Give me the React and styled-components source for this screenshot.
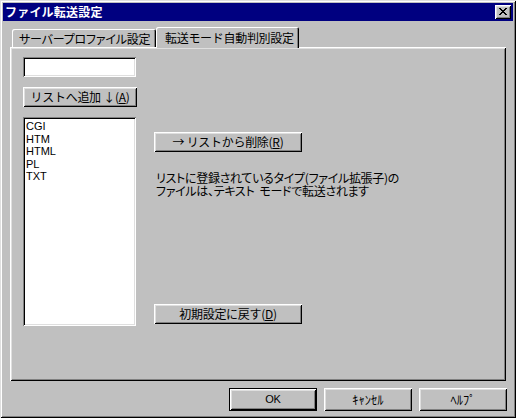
import React from "react";
import styled, { createGlobalStyle } from "styled-components";

const Global = createGlobalStyle`
  html, body { margin: 0; padding: 0; background: #c0c0c0; }
  body { font-family: "Noto Sans CJK JP", "Noto Sans", sans-serif; font-size: 12px; color: #000; }
  * { box-sizing: border-box; }
`;

const Window = styled.div`
  width: 516px;
  height: 418px;
  background: #c0c0c0;
  padding: 3px;
  display: flex;
  flex-direction: column;
  box-shadow: inset 1px 1px #dfdfdf, inset -1px -1px #000, inset 2px 2px #fff, inset -2px -2px #808080;
`;

const TitleBar = styled.div`
  height: 18px;
  background: #000080;
  color: #fff;
  display: flex;
  align-items: center;
  padding: 0 2px 0 2px;
  font-weight: bold;
  font-size: 12px;
  letter-spacing: 0.2px;
`;

const TitleText = styled.span`
  flex: 1;
  line-height: 18px;
`;

const bevel = `
  background: #c0c0c0;
  box-shadow: inset 1px 1px #fff, inset -1px -1px #000, inset 2px 2px #dfdfdf, inset -2px -2px #808080;
`;

const CloseButton = styled.div`
  width: 16px;
  height: 14px;
  ${bevel}
  display: flex;
  align-items: center;
  justify-content: center;
  padding-bottom: 1px;
`;

const Body = styled.div`
  flex: 1;
  padding: 6px 7px 0 7px;
  display: flex;
  flex-direction: column;
`;

const TabRow = styled.div`
  display: flex;
  align-items: flex-end;
  height: 21px;
  padding-left: 2px;
  margin-bottom: -1px;
  position: relative;
  z-index: 1;
`;

const Tab = styled.div`
  width: ${(p) => p.$w}px;
  height: ${(p) => (p.$active ? 21 : 18)}px;
  margin-bottom: ${(p) => (p.$active ? 0 : 1)}px;
  background: #c0c0c0;
  border-top-left-radius: 2px;
  border-top-right-radius: 2px;
  box-shadow: inset 1px 1px #fff, inset -1px 0 #000, inset -2px 0 #808080;
  display: flex;
  align-items: ${(p) => (p.$active ? "flex-start" : "center")};
  padding: ${(p) => (p.$active ? "3px 0 0 9px" : "1px 0 0 7px")};
  font-size: 12px;
  line-height: 16px;
  white-space: nowrap;
  letter-spacing: ${(p) => (p.$active ? "-0.3px" : "-0.2px")};
  font-feature-settings: ${(p) => (p.$active ? "normal" : '"palt"')};
`;

const Panel = styled.div`
  height: 334px;
  background: #c0c0c0;
  box-shadow: inset 1px 1px #fff, inset -1px -1px #000, inset 2px 2px #dfdfdf, inset -2px -2px #808080;
  padding: 10px 0 0 13px;
  display: flex;
  align-items: flex-start;
  gap: 17px;
`;

const LeftCol = styled.div`
  width: 114px;
  display: flex;
  flex-direction: column;
  gap: 10px;
  height: 269px;
`;

const Field = styled.div`
  width: 113px;
  height: ${(p) => p.$h}px;
  background: #fff;
  box-shadow: inset 1px 1px #808080, inset -1px -1px #fff, inset 2px 2px #000, inset -2px -2px #dfdfdf;
  padding: 3px 0 0 3px;
`;

const ListItem = styled.div`
  font-family: "Liberation Sans", Arial, sans-serif;
  font-size: 11px;
  line-height: 12px;
  height: 12.5px;
`;

const Button = styled.div`
  width: ${(p) => p.$w}px;
  height: ${(p) => p.$h || 20}px;
  ${bevel}
  display: flex;
  align-items: center;
  justify-content: center;
  font-size: 12px;
  white-space: nowrap;
  letter-spacing: -0.3px;
  padding-bottom: 1px;
`;

const DefaultButton = styled(Button)`
  border: 1px solid #000;
  box-shadow: inset 1px 1px #fff, inset -1px -1px #000, inset 2px 2px #dfdfdf, inset -2px -2px #808080;
`;

const RightCol = styled.div`
  width: 148px;
  height: 269px;
  display: flex;
  flex-direction: column;
  padding-top: 75px;
`;

const Note = styled.div`
  margin-top: 19px;
  padding-left: 2px;
  font-size: 12px;
  line-height: 13px;
  white-space: nowrap;
  letter-spacing: -0.3px;
  font-feature-settings: "palt";
`;

const Gap = styled.span`
  display: inline-block;
  width: 5px;
`;

const Bottom = styled.div`
  margin-top: auto;
  margin-bottom: 2px;
`;

const Footer = styled.div`
  display: flex;
  justify-content: flex-end;
  gap: 7px;
  margin-top: 7px;
  margin-right: -1px;
`;

const Half = styled.span`
  font-family: "Noto Sans CJK JP", sans-serif;
  font-size: 12.5px;
  letter-spacing: 0;
`;

const Latin = styled.span`
  font-family: "Liberation Sans", Arial, sans-serif;
  font-size: 11px;
`;

export default function App() {
  return (
    <>
      <Global />
      <Window>
        <TitleBar>
          <TitleText>ファイル転送設定</TitleText>
          <CloseButton>
            <svg width="8" height="7" viewBox="0 0 8 7" shapeRendering="crispEdges">
              <path
                fill="#000"
                d="M0 0h2v1h-2zM6 0h2v1h-2zM1 1h2v1h-2zM5 1h2v1h-2zM2 2h4v1h-4zM3 3h2v1h-2zM2 4h4v1h-4zM1 5h2v1h-2zM5 5h2v1h-2zM0 6h2v1h-2zM6 6h2v1h-2z"
              />
            </svg>
          </CloseButton>
        </TitleBar>
        <Body>
          <TabRow>
            <Tab $w={144}>サーバープロファイル設定</Tab>
            <Tab $w={143} $active>転送モード自動判別設定</Tab>
          </TabRow>
          <Panel>
            <LeftCol>
              <Field $h={20} />
              <Button $w={114}>
                リストへ追加 ↓(<u>A</u>)
              </Button>
              <Field $h={209}>
                <ListItem>CGI</ListItem>
                <ListItem>HTM</ListItem>
                <ListItem>HTML</ListItem>
                <ListItem>PL</ListItem>
                <ListItem>TXT</ListItem>
              </Field>
            </LeftCol>
            <RightCol>
              <Button $w={148}>
                → リストから削除(<u>R</u>)
              </Button>
              <Note>
                リストに登録されているタイプ(ファイル拡張子)の
                <br />
                ファイルは、テキスト<Gap />モードで転送されます
              </Note>
              <Bottom>
                <Button $w={148}>
                  初期設定に戻す(<u>D</u>)
                </Button>
              </Bottom>
            </RightCol>
          </Panel>
          <Footer>
            <DefaultButton $w={88} $h={23}>
              <Latin>OK</Latin>
            </DefaultButton>
            <Button $w={88} $h={23}>
              <Half>ｷｬﾝｾﾙ</Half>
            </Button>
            <Button $w={88} $h={23}>
              <Half>ﾍﾙﾌﾟ</Half>
            </Button>
          </Footer>
        </Body>
      </Window>
    </>
  );
}
